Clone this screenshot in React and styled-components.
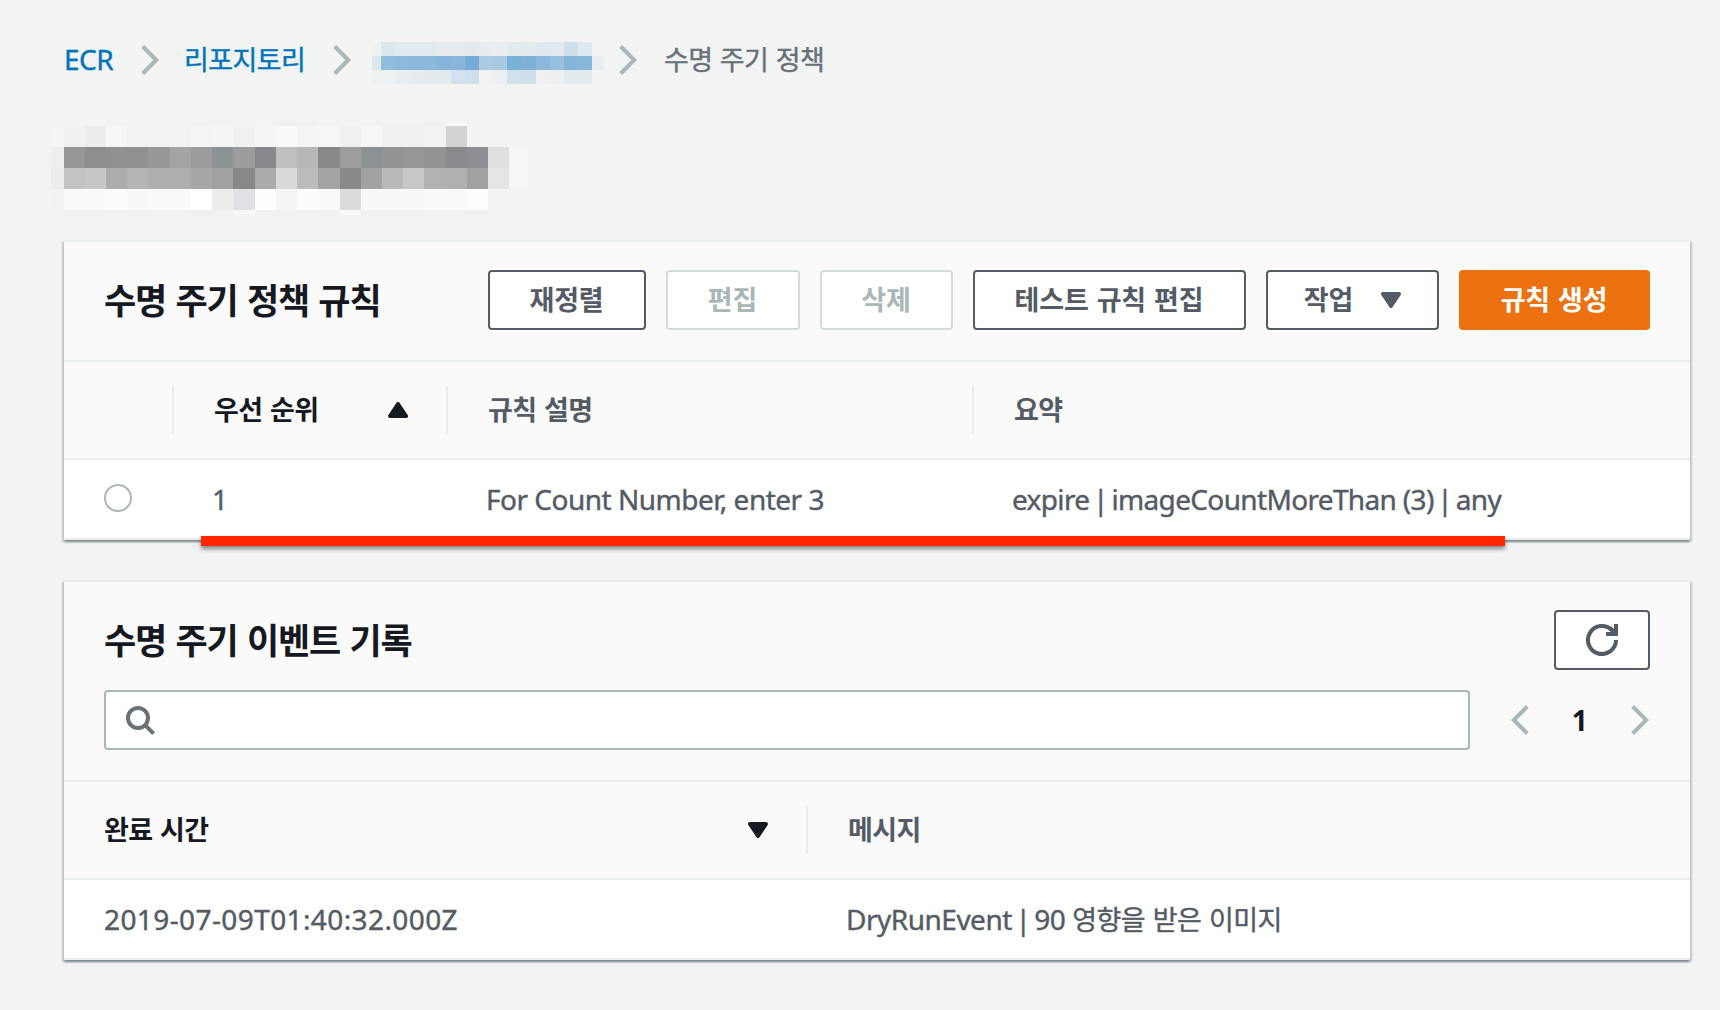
import React from "react";
import styled, { createGlobalStyle, css } from "styled-components";

const GlobalStyle = createGlobalStyle`
  * { box-sizing: border-box; }
  body { margin: 0; background: #f2f3f3; }
  button { font: inherit; margin: 0; padding: 0; }
`;

const latin = css`
  font-family: "Noto Sans", "Noto Sans CJK KR", sans-serif;
  font-size: 28px;
  letter-spacing: -0.5px;
`;

const hangul = css`
  font-family: "Noto Sans CJK KR", sans-serif;
  font-size: 27px;
  letter-spacing: -0.6px;
  word-spacing: 2px;
`;

const sturdy = css`
  -webkit-text-stroke: 0.4px currentColor;
`;

const Page = styled.div`
  width: 1720px;
  height: 1010px;
  padding: 30px 30px 50px 64px;
  overflow: hidden;
  background: #f2f3f3;
  color: #545b64;
  line-height: 40px;
  white-space: nowrap;
`;

const Breadcrumbs = styled.nav`
  display: flex;
  align-items: center;
  height: 60px;
`;

const Crumb = styled.a`
  ${(p) => (p.$latin ? latin : hangul)}
  ${sturdy}
  width: ${(p) => p.$width}px;
  padding-bottom: 2px;
  color: ${(p) => (p.$current ? "#687078" : "#0073bb")};
  flex: none;
`;

const CrumbArrow = styled.span`
  display: flex;
  flex: none;
  margin: 0 ${(p) => p.$after}px 0 ${(p) => p.$before}px;
`;

const MaskedCrumb = styled.div`
  padding-top: 3px;
`;

const MaskedTitle = styled.div`
  margin-top: 32px;
  margin-left: -13px;
  height: 93px;
`;

const MosaicGrid = styled.div`
  display: grid;
  width: max-content;
  flex: none;
  grid-template-columns: ${(p) => p.$columns};
  grid-template-rows: ${(p) => p.$rows};
`;

const Cell = styled.i`
  background: ${(p) => p.$color};
`;

const Card = styled.section`
  position: relative;
  width: 1626px;
  margin-top: ${(p) => p.$gap || 0}px;
  border-top: 2px solid #eaeded;
  background: #fff;
  box-shadow: 0 2px 2px 0 rgba(0, 28, 36, 0.3), 2px 2px 2px 0 rgba(0, 28, 36, 0.15),
    -2px 2px 2px 0 rgba(0, 28, 36, 0.15);
`;

const CardHeader = styled.header`
  padding: 28px 40px 30px;
  background: #fafafa;
  border-bottom: 2px solid #eaeded;
`;

const HeaderRow = styled.div`
  display: flex;
  align-items: center;
  justify-content: space-between;
  height: 60px;
`;

const Title = styled.h2`
  margin: 0;
  padding-bottom: 2px;
  font-family: "Noto Sans CJK KR", sans-serif;
  font-size: 35px;
  font-weight: 700;
  letter-spacing: -1.1px;
  word-spacing: 2.4px;
  color: #16191f;
`;

const Actions = styled.div`
  display: flex;
  gap: 20px;
`;

const tones = {
  normal: { ink: "#545b64", edge: "#545b64", fill: "#fff" },
  disabled: { ink: "#aab7b8", edge: "#d5dbdb", fill: "#fff" },
  primary: { ink: "#fff", edge: "#ec7211", fill: "#ec7211" },
};

const Button = styled.button`
  ${hangul}
  display: flex;
  align-items: center;
  justify-content: center;
  gap: 27px;
  width: ${(p) => p.$width}px;
  height: 60px;
  font-weight: 700;
  letter-spacing: -0.15px;
  border: 2px solid ${(p) => tones[p.$tone || "normal"].edge};
  border-radius: 4px;
  background: ${(p) => tones[p.$tone || "normal"].fill};
  color: ${(p) => tones[p.$tone || "normal"].ink};
`;

const ButtonLabel = styled.span`
  padding: 0 1px 3px 0;
`;

const ColumnHeads = styled.div`
  display: grid;
  grid-template-columns: ${(p) => p.$columns};
  align-items: center;
  height: 98px;
  background: #fafafa;
  border-bottom: 2px solid #eaeded;
`;

const ColumnHead = styled.div`
  ${hangul}
  display: flex;
  align-items: center;
  justify-content: space-between;
  height: 48px;
  padding: 0 38px 0 40px;
  font-weight: 700;
  color: ${(p) => (p.$sorted ? "#16191f" : "#545b64")};
  border-right: ${(p) => (p.$last ? 0 : 2)}px solid #eaeded;
`;

const HeadLabel = styled.span`
  padding-bottom: 2px;
`;

const Row = styled.div`
  display: grid;
  grid-template-columns: ${(p) => p.$columns};
  align-items: center;
  height: 80px;
  border-bottom: 2px solid #eaeded;
`;

const CellText = styled.div`
  ${latin}
  ${sturdy}
  padding-left: ${(p) => p.$inset ?? 38}px;
  letter-spacing: ${(p) => p.$spacing ?? -0.5}px;
`;

const Pipe = styled.span`
  margin: 0 -3px;
`;

const Hangul = styled.span`
  ${hangul}
  position: relative;
  letter-spacing: -0.5px;
`;

const Radio = styled.span`
  display: block;
  width: 28px;
  height: 28px;
  margin: -2px 0 0 40px;
  border: 2px solid #aab7b8;
  border-radius: 50%;
  background: #fff;
`;

const Underline = styled.div`
  position: absolute;
  left: 137px;
  top: 294px;
  width: 1304px;
  height: 10px;
  background: #ff2600;
  box-shadow: 0 3px 4px rgba(0, 0, 0, 0.45);
`;

const SearchRow = styled.div`
  display: flex;
  align-items: center;
  margin-top: 20px;
`;

const SearchBox = styled.div`
  display: flex;
  align-items: center;
  width: 1366px;
  height: 60px;
  padding: 2px 0 0 20px;
  border: 2px solid #aab7b8;
  border-radius: 4px;
  background: #fff;
`;

const Pager = styled.div`
  display: flex;
  align-items: center;
  justify-content: space-between;
  width: 138px;
  margin-left: 41px;
`;

const PageNumber = styled.span`
  ${latin}
  padding: 0 1px 1px 0;
  font-weight: 700;
  color: #16191f;
`;

const Chevron = ({ left }) => (
  <svg width="18" height="30" viewBox="0 0 18 30">
    <path
      d={left ? "M16.3 1.5 2.8 15l13.5 13.5" : "M1.7 1.5 15.2 15 1.7 28.5"}
      fill="none"
      stroke="#aab7b8"
      strokeWidth="4"
    />
  </svg>
);

const Triangle = ({ up }) => (
  <svg width="20" height="16" viewBox="0 0 20 16">
    <path
      d={up ? "M10 2 18 14H2Z" : "M2 2H18L10 14Z"}
      fill="currentColor"
      stroke="currentColor"
      strokeWidth="4"
      strokeLinejoin="round"
    />
  </svg>
);

const SearchIcon = () => (
  <svg width="30" height="30" viewBox="0 0 30 30">
    <circle cx="12" cy="12" r="10" fill="none" stroke="#687078" strokeWidth="4" />
    <path d="M19 19l8.6 8.6" stroke="#687078" strokeWidth="4" />
  </svg>
);

const RefreshIcon = () => (
  <svg width="32" height="32" viewBox="0 0 32 32" fill="none" stroke="#545b64" strokeWidth="4">
    <path d="M30 16a14 14 0 1 1-3.8-9.6" />
    <path d="M30 0v10H20" />
    <path d="M24 4l5 5" />
  </svg>
);

const Mosaic = ({ columns, rows, cells }) => (
  <MosaicGrid $columns={columns} $rows={rows}>
    {cells.flatMap((line, r) =>
      line.split(" ").map((c, i) => <Cell key={`${r}-${i}`} $color={c === "-" ? "transparent" : `#${c}`} />)
    )}
  </MosaicGrid>
);

const crumbCells = [
  "- f4f3f2 f4f3f2 f4f3f2 f4f3f2 f4f3f2 f4f3f2 f4f3f2 f2f3f3 f2f3f3 f4f3f2 f4f3f2 f4f3f2 f2f3f3 f5f3f1 f4f3f2 -",
  "eef1f2 dce7ec e1eaef e1eaef e1eaef e6ebef e6ebee e3eaed e7ecf0 eaeef1 e1eaee e3ebee dfe8ef e1e9ee cfe0ea dee8f0 f3f3f3",
  "dde7ee 92bedd 8dbadb 8cb9da 8bb8db 86b4da 89b5d9 75abd4 accbe1 a9c8e2 7ab1d7 81b1d9 8cb7db 97bfe0 84b4d8 86b6d9 ebedf0",
  "eef1f2 eef1f2 ebeef0 e6ebf0 e4ebee e4ebee d2e1ed cee0eb f1f2f1 ebeef2 d1e1ec cfe0eb eef0f2 edf0f1 e2ebee e2ebee -",
  "- - f3f3f2 f3f3f2 f5f3f1 f5f3f1 f5f3f1 f5f3f1 - - f4f3f2 f4f3f2 - - f4f3f2 f4f3f2 -",
];

const titleCells = [
  "- - - - - - - f0f1f1 f0f1f1 - - f0f0f2 f0f0f2 - - - f0f1f1 f0f1f1 f0f1f1 f7f9f9 - - -",
  "f3f5f4 f0f2f1 eceeed f6f8f7 f1f3f2 f1f3f2 f1f3f2 f3f5f4 f4f6f5 f0f2f1 f4f6f5 f8faf9 f4f6f5 f5f7f6 eff1f0 f5f7f6 f2f1f1 f0f2f1 f2f4f3 d2d3d5 f2f4f3 f2f4f3 -",
  "edeef0 969798 8d8e8f 909192 8f9091 979899 a3a4a5 9b9c9d 8d9295 9b9c9d 87888b bfc0c2 b6b7b9 888989 9c9d9e 8c9194 939495 959697 929394 898a8e 8e8f93 dee0df f5f7f6",
  "ebedec c3c4c6 c6c7c9 abacae b4b5b7 aeafb1 adaeb0 a6a7a9 a0a1a3 87888a a9aaac d9dbda bbbcbe a3a4a6 88898b a1a2a4 b8b9bb c7c8ca b0b1b3 afb0b2 a0a1a3 e4e6e5 f5f7f6",
  "f1f3f2 f8faf9 f8faf9 fbfdfc f7f9f8 f9fbfa f9fbfa fefffe eceeed e0e1e4 fdfdfd f5f5f5 fbfdfc f8faf9 dbdddc f7f9f8 f7f9f8 f7f9f8 fafafa fafafa fdfdfd f2f4f3 -",
  "- f0f1f1 f0f1f1 f0f1f1 f0f1f1 f0f1f1 f0f1f1 eff0f0 f0f1f1 f6f7f7 f0f1f1 f0f1f1 f0f1f1 f0f1f1 f7f9f8 f0f1f1 f0f1f1 f0f1f1 f0f1f1 f0f1f1 eeefef - -",
];

const ruleColumns = "110px 274px 526px 1fr";
const eventColumns = "744px 1fr";

const Action = ({ width, tone, children, menu }) => (
  <Button $width={width} $tone={tone}>
    <ButtonLabel>{children}</ButtonLabel>
    {menu && <Triangle />}
  </Button>
);

export default function App() {
  return (
    <>
      <GlobalStyle />
      <Page>
        <Breadcrumbs>
          <Crumb $latin $width={50}>ECR</Crumb>
          <CrumbArrow $before={27} $after={25}><Chevron /></CrumbArrow>
          <Crumb $width={121}>리포지토리</Crumb>
          <CrumbArrow $before={28} $after={21}><Chevron /></CrumbArrow>
          <MaskedCrumb>
            <Mosaic
              columns="8.5px repeat(15, 14.1px) 12px"
              rows="7px 14px 14px 14px 4px"
              cells={crumbCells}
            />
          </MaskedCrumb>
          <CrumbArrow $before={15} $after={27}><Chevron /></CrumbArrow>
          <Crumb $current $width={170}>수명 주기 정책</Crumb>
        </Breadcrumbs>

        <MaskedTitle>
          <Mosaic
            columns="12.5px repeat(21, 21.24px) 18.5px"
            rows="4px 21px 21.4px 21px 21px 4.5px"
            cells={titleCells}
          />
        </MaskedTitle>

        <Card $gap={25}>
          <CardHeader>
            <HeaderRow>
              <Title>수명 주기 정책 규칙</Title>
              <Actions>
                <Action width={158}>재정렬</Action>
                <Action width={134} tone="disabled">편집</Action>
                <Action width={133} tone="disabled">삭제</Action>
                <Action width={273}>테스트 규칙 편집</Action>
                <Action width={173} menu>작업</Action>
                <Action width={191} tone="primary">규칙 생성</Action>
              </Actions>
            </HeaderRow>
          </CardHeader>
          <ColumnHeads $columns={ruleColumns}>
            <ColumnHead />
            <ColumnHead $sorted><HeadLabel>우선 순위</HeadLabel><Triangle up /></ColumnHead>
            <ColumnHead><HeadLabel>규칙 설명</HeadLabel></ColumnHead>
            <ColumnHead $last><HeadLabel>요약</HeadLabel></ColumnHead>
          </ColumnHeads>
          <Row $columns={ruleColumns}>
            <Radio />
            <CellText>1</CellText>
            <CellText>For Count Number, enter 3</CellText>
            <CellText $spacing={-0.65}>
              expire <Pipe>|</Pipe> imageCountMoreThan (3) <Pipe>|</Pipe> any
            </CellText>
          </Row>
          <Underline />
        </Card>

        <Card $gap={40}>
          <CardHeader>
            <HeaderRow>
              <Title>수명 주기 이벤트 기록</Title>
              <Button $width={96}><RefreshIcon /></Button>
            </HeaderRow>
            <SearchRow>
              <SearchBox><SearchIcon /></SearchBox>
              <Pager>
                <Chevron left />
                <PageNumber>1</PageNumber>
                <Chevron />
              </Pager>
            </SearchRow>
          </CardHeader>
          <ColumnHeads $columns={eventColumns}>
            <ColumnHead $sorted><HeadLabel>완료 시간</HeadLabel><Triangle /></ColumnHead>
            <ColumnHead $last><HeadLabel>메시지</HeadLabel></ColumnHead>
          </ColumnHeads>
          <Row $columns={eventColumns}>
            <CellText $inset={40} $spacing={0.4}>2019-07-09T01:40:32.000Z</CellText>
            <CellText>DryRunEvent <Pipe>|</Pipe> 90 <Hangul>영향을 받은 이미지</Hangul></CellText>
          </Row>
        </Card>
      </Page>
    </>
  );
}
